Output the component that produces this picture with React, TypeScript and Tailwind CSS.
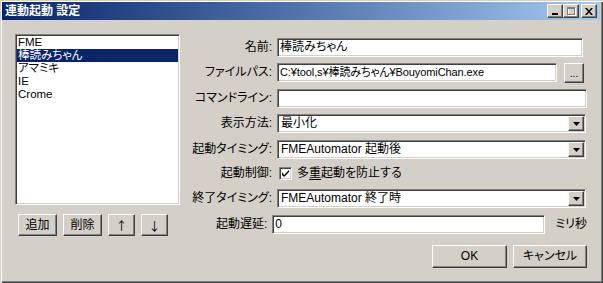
import React from "react";

const sunken =
  "bg-white border border-t-[#808080] border-l-[#808080] border-b-white border-r-white shadow-[inset_1px_1px_0_#404040,inset_-1px_-1px_0_#d4d0c8]";
const raised =
  "bg-[#d4d0c8] border border-t-white border-l-white border-b-[#404040] border-r-[#404040] shadow-[inset_-1px_-1px_0_#808080,inset_1px_1px_0_#d4d0c8]";

function Label({ children }: { children: React.ReactNode }) {
  return (
    <div className="w-[87px] h-[19px] leading-[19px] text-right whitespace-nowrap text-black">
      {children}
    </div>
  );
}

function TextBox({ w, value, small }: { w: string; value?: string; small?: boolean }) {
  return (
    <div
      className={`${sunken} ${w} h-[19px] pl-[2px] leading-[17px] whitespace-nowrap overflow-hidden ${small ? "text-[11px] tracking-[-0.1px]" : ""}`}
    >
      {value}
    </div>
  );
}

function Combo({ value }: { value: string }) {
  return (
    <div className={`${sunken} w-[309px] h-[19px] p-[1px] flex`}>
      <div className="flex-1 pl-[2px] leading-[15px] whitespace-nowrap">{value}</div>
      <div className={`${raised} w-[16px] h-[15px] flex items-center justify-center`}>
        <svg width="7" height="4" viewBox="0 0 7 4">
          <path d="M0 0H7L3.5 4Z" fill="#000" />
        </svg>
      </div>
    </div>
  );
}

function Row({ label, children, mt }: { label: string; children: React.ReactNode; mt: string }) {
  return (
    <div className={`flex items-start ${mt}`}>
      <Label>{label}</Label>
      <div className="ml-[5px] flex items-start">{children}</div>
    </div>
  );
}

function Item({ children, sel }: { children: React.ReactNode; sel?: boolean }) {
  return (
    <div className={`pl-[1px] h-[13px] leading-[13px] text-[11.5px] overflow-hidden whitespace-nowrap ${sel ? "bg-[#0a246a] text-white" : ""}`}>
      {children}
    </div>
  );
}

export default function App() {
  return (
    <div className="w-[603px] h-[283px] bg-[#d4d0c8] flex flex-col pt-[2px] pl-[2px] pr-[3px] pb-[3px] shadow-[inset_1px_1px_0_#d4d0c8,inset_2px_2px_0_#ffffff,inset_-1px_-1px_0_#404040,inset_-2px_-2px_0_#808080] font-['Liberation_Sans','Noto_Sans_CJK_JP',sans-serif] [font-feature-settings:'palt'] text-[12px] leading-[13px] text-black">
      {/* Title bar */}
      <div className="h-[18px] flex items-center bg-gradient-to-r from-[#0a246a] to-[#a6caf0] pl-[3px] pr-[3px]">
        <div className="flex-1 text-white font-bold text-[12px] leading-[18px] whitespace-nowrap">連動起動 設定</div>
        <div className={`${raised} w-[16px] h-[14px] flex items-end justify-center pb-[2px]`}>
          <div className="w-[6px] h-[2px] bg-black ml-[-1px]" />
        </div>
        <div className={`${raised} w-[16px] h-[14px] flex items-center justify-center`}>
          <svg width="9" height="9" viewBox="0 0 9 9">
            <rect x="1.5" y="1.5" width="7" height="7" fill="none" stroke="#fff" />
            <rect x="0.5" y="0.5" width="7" height="7" fill="none" stroke="#808080" />
            <rect x="0.5" y="1" width="7" height="1" fill="#808080" />
          </svg>
        </div>
        <div className={`${raised} w-[16px] h-[14px] ml-[2px] flex items-center justify-center`}>
          <svg width="8" height="7" viewBox="0 0 8 7">
            <path d="M0 0h2l2 2.5L6 0h2L5 3.5 8 7H6L4 4.5 2 7H0l3-3.5Z" fill="#000" />
          </svg>
        </div>
      </div>

      {/* Body */}
      <div className="flex flex-1">
        {/* Left column */}
        <div className="ml-[13px] mt-[14px] w-[165px] flex flex-col">
          <div className={`${sunken} h-[171px] p-[1px]`}>
            <Item>FME</Item>
            <Item sel>棒読みちゃん</Item>
            <Item>アマミキ</Item>
            <Item>IE</Item>
            <Item>Crome</Item>
          </div>
          <div className="flex mt-[9px] pl-[3px] gap-[6px]">
            <button className={`${raised} w-[39px] h-[22px] flex items-center justify-center`}>追加</button>
            <button className={`${raised} w-[39px] h-[22px] flex items-center justify-center`}>削除</button>
            <button className={`${raised} w-[27px] h-[22px] flex items-center justify-center font-['Noto_Sans_CJK_JP',sans-serif] text-[12px]`}>↑</button>
            <button className={`${raised} w-[27px] h-[22px] flex items-center justify-center font-['Noto_Sans_CJK_JP',sans-serif] text-[12px]`}>↓</button>
          </div>
        </div>

        {/* Right column */}
        <div className="ml-[5px] mt-[18px] w-[402px] flex flex-col">
          <Row label="名前:" mt="mt-0">
            <TextBox w="w-[306px]" value="棒読みちゃん" />
          </Row>
          <Row label="ファイルパス:" mt="mt-[6px]">
            <TextBox w="w-[280px]" value="C:¥tool,s¥棒読みちゃん¥BouyomiChan.exe" small />
            <button className={`${raised} ml-[7px] w-[20px] h-[20px] flex items-end justify-center pb-[4px] leading-[8px] text-[10px]`}>...</button>
          </Row>
          <Row label="コマンドライン:" mt="mt-[6px]">
            <TextBox w="w-[310px]" />
          </Row>
          <Row label="表示方法:" mt="mt-[6px]">
            <Combo value="最小化" />
          </Row>
          <Row label="起動タイミング:" mt="mt-[7px]">
            <Combo value="FMEAutomator 起動後" />
          </Row>
          <Row label="起動制御:" mt="mt-[5px]">
            <div className="h-[19px] flex items-center">
              <div className={`${sunken} ml-[2px] w-[13px] h-[13px] flex items-center justify-center`}>
                <svg width="7" height="7" viewBox="0 0 7 7">
                  <path d="M0 2v3l2 2 5-5V0L2 5Z" fill="#000" />
                </svg>
              </div>
              <span className="ml-[5px] whitespace-nowrap">
                多<span className="underline underline-offset-2">重</span>起動を防止する
              </span>
            </div>
          </Row>
          <Row label="終了タイミング:" mt="mt-[6px]">
            <Combo value="FMEAutomator 終了時" />
          </Row>
          <Row label="起動遅延:" mt="mt-[7px]">
            <TextBox w="w-[273px]" value="0" />
            <div className="ml-[10px] h-[19px] leading-[19px] whitespace-nowrap">ミリ秒</div>
          </Row>
          <div className="flex justify-end mt-[11px] gap-[6px]">
            <button className={`${raised} w-[75px] h-[23px] flex items-center justify-center`}>OK</button>
            <button className={`${raised} w-[74px] h-[23px] flex items-center justify-center`}>キャンセル</button>
          </div>
        </div>
      </div>
    </div>
  );
}
